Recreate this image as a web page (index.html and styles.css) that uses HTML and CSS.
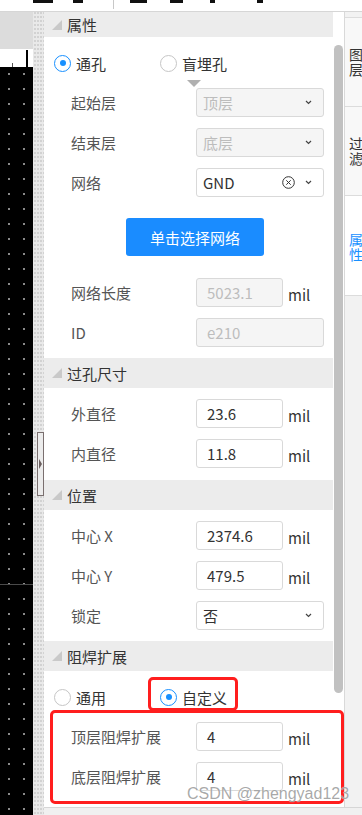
FILE: index.html
```html
<!DOCTYPE html>
<html lang="zh-CN">
<head>
    <meta charset="UTF-8">
    <meta name="viewport" content="width=device-width, initial-scale=1.0">
    <title>过孔属性</title>
    <link rel="stylesheet" href="styles.css">
</head>
<body>
    <div class="topbar">
        <span class="frag w20"></span>
        <span class="frag w10 g20"></span>
        <span class="sep"></span>
        <span class="frag w17 g16"></span>
        <span class="frag w13 g23"></span>
        <span class="frag w5 g27"></span>
        <span class="frag w6 g42"></span>
    </div>

    <div class="main">
        <div class="canvas">
            <div class="canvas-top"></div>
            <div class="ruler">
                <span class="tick-small"></span>
                <span class="tick-big"></span>
            </div>
            <div class="board"></div>
        </div>

        <div class="splitter">
            <div class="handle"><span class="handle-arrow"></span></div>
        </div>

        <div class="right">
            <div class="workspace">
                <div class="panel">
                    <!-- 属性 -->
                    <div class="group-title first"><span class="caret"></span>属性</div>
                    <div class="group-body props">
                        <div class="radio-row">
                            <label class="radio wide"><span class="dot checked"></span>通孔</label>
                            <label class="radio hint"><span class="dot"></span>盲埋孔</label>
                        </div>
                        <div class="row">
                            <span class="label">起始层</span>
                            <div class="field select disabled">顶层
                                <svg class="chevron" width="7" height="5" viewBox="0 0 7 5"><path d="M1 1l2.5 2.5L6 1" fill="none" stroke="#444" stroke-width="1.2"/></svg>
                            </div>
                        </div>
                        <div class="row">
                            <span class="label">结束层</span>
                            <div class="field select disabled">底层
                                <svg class="chevron" width="7" height="5" viewBox="0 0 7 5"><path d="M1 1l2.5 2.5L6 1" fill="none" stroke="#444" stroke-width="1.2"/></svg>
                            </div>
                        </div>
                        <div class="row">
                            <span class="label">网络</span>
                            <div class="field select">GND
                                <svg class="clear" width="13" height="13" viewBox="0 0 13 13"><circle cx="6.5" cy="6.5" r="5.8" fill="none" stroke="#333" stroke-width="1"/><path d="M4.3 4.3l4.4 4.4M8.7 4.3l-4.4 4.4" stroke="#333" stroke-width="1"/></svg>
                                <svg class="chevron" width="7" height="5" viewBox="0 0 7 5"><path d="M1 1l2.5 2.5L6 1" fill="none" stroke="#444" stroke-width="1.2"/></svg>
                            </div>
                        </div>
                        <button class="pick-net">单击选择网络</button>
                        <div class="row">
                            <span class="label">网络长度</span>
                            <div class="field input short disabled">5023.1</div>
                            <span class="unit">mil</span>
                        </div>
                        <div class="row">
                            <span class="label">ID</span>
                            <div class="field input disabled">e210</div>
                        </div>
                    </div>

                    <!-- 过孔尺寸 -->
                    <div class="group-title"><span class="caret"></span>过孔尺寸</div>
                    <div class="group-body size">
                        <div class="row">
                            <span class="label">外直径</span>
                            <div class="field input short">23.6</div>
                            <span class="unit">mil</span>
                        </div>
                        <div class="row">
                            <span class="label">内直径</span>
                            <div class="field input short">11.8</div>
                            <span class="unit">mil</span>
                        </div>
                    </div>

                    <!-- 位置 -->
                    <div class="group-title"><span class="caret"></span>位置</div>
                    <div class="group-body">
                        <div class="row">
                            <span class="label">中心 X</span>
                            <div class="field input short">2374.6</div>
                            <span class="unit">mil</span>
                        </div>
                        <div class="row">
                            <span class="label">中心 Y</span>
                            <div class="field input short">479.5</div>
                            <span class="unit">mil</span>
                        </div>
                        <div class="row">
                            <span class="label">锁定</span>
                            <div class="field select">否
                                <svg class="chevron" width="7" height="5" viewBox="0 0 7 5"><path d="M1 1l2.5 2.5L6 1" fill="none" stroke="#444" stroke-width="1.2"/></svg>
                            </div>
                        </div>
                    </div>

                    <!-- 阻焊扩展 -->
                    <div class="group-title"><span class="caret"></span>阻焊扩展</div>
                    <div class="group-body mask">
                        <div class="radio-row">
                            <label class="radio wide"><span class="dot"></span>通用</label>
                            <label class="radio"><span class="dot checked"></span>自定义</label>
                        </div>
                        <div class="row">
                            <span class="label">顶层阻焊扩展</span>
                            <div class="field input short">4</div>
                            <span class="unit">mil</span>
                        </div>
                        <div class="row">
                            <span class="label">底层阻焊扩展</span>
                            <div class="field input short">4</div>
                            <span class="unit">mil</span>
                        </div>
                    </div>

                    <div class="mark mark-radio"></div>
                    <div class="mark mark-fields"></div>
                    <div class="watermark">CSDN @zhengyad123</div>
                </div>

                <div class="scroll"><div class="thumb"></div></div>

                <div class="sidebar">
                    <div class="tab">图层</div>
                    <div class="tab">过滤</div>
                    <div class="tab active">属性</div>
                </div>
            </div>
            <div class="statusbar"></div>
        </div>
    </div>
</body>
</html>
```

FILE: styles.css
```css
body {
    margin: 0;
    width: 362px;
    height: 815px;
    overflow: hidden;
    background-color: #fff;
    font-family: "Noto Sans CJK SC", sans-serif;
    font-size: 15px;
    color: #333;
}

/* toolbar remnants at the very top */
.topbar {
    height: 11px;
    border-bottom: 1px solid #d6d6d6;
    display: flex;
    align-items: flex-start;
}

.frag {
    height: 3px;
    background-color: #111;
}

.w20 { width: 20px; margin-left: 33px; }
.w10 { width: 10px; }
.w17 { width: 17px; }
.w13 { width: 13px; }
.w5 { width: 5px; }
.w6 { width: 6px; }
.g20 { margin-left: 20px; }
.g16 { margin-left: 16px; }
.g23 { margin-left: 23px; }
.g27 { margin-left: 27px; }
.g42 { margin-left: 42px; }

.sep {
    width: 1px;
    height: 9px;
    margin-left: 30px;
    background-color: #c8c8c8;
}

.main {
    display: flex;
    height: 803px;
}

/* pcb canvas */
.canvas {
    width: 33px;
    flex-shrink: 0;
    display: flex;
    flex-direction: column;
}

.canvas-top {
    height: 37px;
    background-color: #dcdcdc;
}

.ruler {
    height: 18px;
    background-color: #fff;
    position: relative;
}

.tick-small {
    position: absolute;
    left: 12px;
    bottom: 0;
    width: 1px;
    height: 4px;
    background-color: #555;
}

.tick-big {
    position: absolute;
    left: 26px;
    bottom: 0;
    width: 2px;
    height: 17px;
    background-color: #000;
}

.board {
    flex: 1;
    background-color: #000;
    background-image:
        linear-gradient(to bottom, transparent 517px, #4a4a4a 517px, #4a4a4a 518px, transparent 518px),
        radial-gradient(circle at 1px 1px, #8a8a8a 0.8px, transparent 1px);
    background-size: 100% 100%, 15px 15px;
    background-position: 0 0, 8px 6px;
}

/* splitter between canvas and panel */
.splitter {
    width: 11px;
    flex-shrink: 0;
    position: relative;
    background-color: #e9e9e9;
    background-image: radial-gradient(circle at 1px 1px, #d2d2d2 1px, transparent 1px);
    background-size: 3px 4px;
    background-position: 4px 0;
}

.handle {
    position: absolute;
    left: 4px;
    top: 420px;
    width: 5px;
    height: 62px;
    border: 1px solid #7a6f6f;
    background-color: #ececec;
    display: flex;
    align-items: center;
}

.handle-arrow {
    width: 0;
    height: 0;
    border-top: 5px solid transparent;
    border-bottom: 5px solid transparent;
    border-left: 3px solid #6b5f5f;
    margin-left: 1px;
}

.right {
    flex: 1;
    min-width: 0;
    display: flex;
    flex-direction: column;
}

.workspace {
    height: 795px;
    display: flex;
}

.statusbar {
    flex: 1;
    border-top: 1px solid #d6d6d6;
    background-color: #f0f0f0;
}

/* property panel */
.panel {
    width: 289px;
    flex-shrink: 0;
    background-color: #fff;
    position: relative;
}

.group-title {
    height: 30px;
    background-color: #ececec;
    display: flex;
    align-items: center;
    padding-left: 8px;
    color: #333;
}

.group-title.first {
    height: 25px;
}

.caret {
    width: 0;
    height: 0;
    border-left: 10px solid transparent;
    border-bottom: 10px solid #c9c9c9;
    margin-right: 5px;
}

.group-body {
    display: flex;
    flex-direction: column;
    gap: 11px;
    padding: 11px 0;
}

.group-body.props {
    padding: 13px 0 11px;
}

.group-body.size {
    padding-bottom: 12px;
}

.group-body.mask {
    padding: 13px 0 16px;
}

.radio-row {
    height: 26px;
    margin-bottom: 1px;
    padding-left: 10px;
    display: flex;
    align-items: center;
}

.radio {
    display: flex;
    align-items: center;
    gap: 5px;
    color: #333;
    position: relative;
}

.radio.wide {
    width: 106px;
}

.radio.hint::after {
    content: '';
    position: absolute;
    left: 27px;
    top: 27px;
    border-left: 7px solid transparent;
    border-right: 7px solid transparent;
    border-top: 7px solid #b0b0b0;
}

.dot {
    width: 15px;
    height: 15px;
    border: 1px solid #c6c6c6;
    border-radius: 50%;
    display: flex;
    align-items: center;
    justify-content: center;
}

.dot.checked {
    border-color: #1890ff;
}

.dot.checked::after {
    content: '';
    width: 6px;
    height: 6px;
    border-radius: 50%;
    background-color: #1890ff;
}

.row {
    height: 29px;
    display: flex;
    align-items: center;
    padding-left: 27px;
}

.label {
    width: 125px;
    flex-shrink: 0;
    color: #555;
}

.field {
    box-sizing: border-box;
    width: 128px;
    height: 29px;
    border: 1px solid #d9d9d9;
    border-radius: 3px;
    display: flex;
    align-items: center;
    color: #333;
}

.field.short {
    width: 87px;
}

.field.input {
    padding-left: 10px;
}

.field.select {
    padding: 0 11px 0 6px;
}

.field.disabled {
    background-color: #f5f5f5;
    color: #bdbdbd;
}

.clear {
    margin-left: auto;
}

.chevron {
    margin-left: auto;
}

.clear + .chevron {
    margin-left: 10px;
}

.unit {
    margin-left: 5px;
    padding-top: 4px;
    color: #333;
}

.pick-net {
    align-self: flex-start;
    width: 138px;
    height: 38px;
    margin: 10px 0 11px 82px;
    border: none;
    border-radius: 3px;
    background-color: #1a8cff;
    color: #fff;
    font-family: inherit;
    font-size: 15px;
}

/* red annotation boxes and watermark */
.mark {
    position: absolute;
    border: 3px solid #ff1e1e;
    border-radius: 5px;
}

.mark-radio {
    left: 104px;
    top: 665px;
    width: 84px;
    height: 28px;
}

.mark-fields {
    left: 6px;
    top: 698px;
    width: 288px;
    height: 88px;
}

.watermark {
    position: absolute;
    left: 143px;
    top: 773px;
    font-family: "Liberation Sans", sans-serif;
    font-size: 16px;
    line-height: 18px;
    color: rgba(110, 110, 110, 0.6);
    text-shadow: 0 0 1px #fff;
    white-space: nowrap;
}

/* scrollbar */
.scroll {
    width: 11px;
    flex-shrink: 0;
    background-color: #fff;
}

.thumb {
    width: 9px;
    height: 648px;
    margin: 33px 0 0 1px;
    border-radius: 5px;
    background-color: #c1c1c1;
}

/* right tab strip */
.sidebar {
    flex: 1;
    min-width: 0;
    border-left: 1px solid #d9d9d9;
    padding-top: 5px;
    background-color: #f2f2f2;
    overflow: hidden;
}

.tab {
    height: 89px;
    border-top: 1px solid #dcdcdc;
    background-color: #f8f8f8;
    box-sizing: border-box;
    padding-left: 4px;
    width: 20px;
    font-size: 14px;
    line-height: 15px;
    word-break: break-all;
    display: flex;
    align-items: center;
    color: #333;
}

.tab.active {
    height: 101px;
    padding-top: 2px;
    background-color: #fff;
    color: #1890ff;
    border-bottom: 1px solid #dcdcdc;
}
```
